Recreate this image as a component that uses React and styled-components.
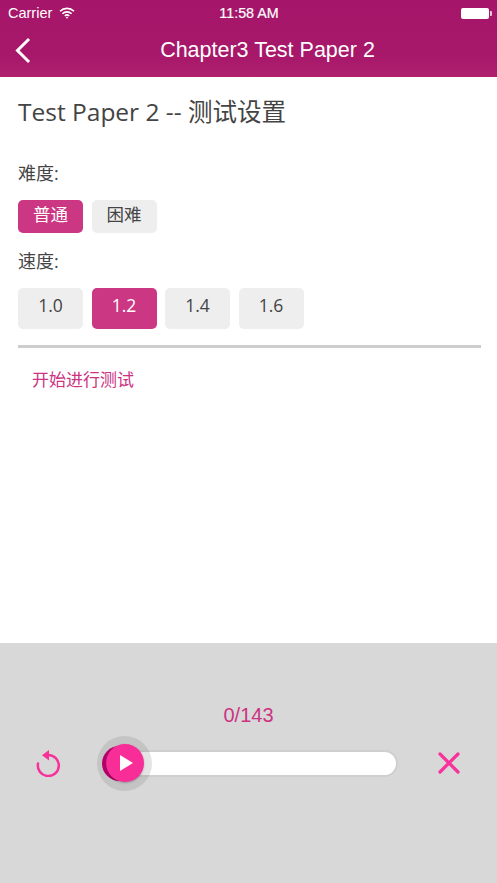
import React from "react";
import styled, { createGlobalStyle } from "styled-components";

const Global = createGlobalStyle`
  html, body { margin: 0; padding: 0; background: #fff; }
  #root { width: 497px; height: 883px; }
`;
const CJK = `"Open Sans", "Noto Sans CJK SC", sans-serif`;
const Screen = styled.div`
  width: 497px; height: 883px; display: flex; flex-direction: column; overflow: hidden;
  font-family: ${CJK}; color: #444;
`;
const Header = styled.header`
  height: 77px; flex: none; display: flex; flex-direction: column; box-sizing: border-box;
  background: linear-gradient(#a5166a 0%, #a7176a 70%, #b0206f 100%);
  color: #fff; font-family: "Liberation Sans", sans-serif;
`;
const StatusBar = styled.div`
  height: 26px; display: grid; grid-template-columns: 1fr auto 1fr; align-items: center;
  padding: 0 7px 0 8px; font-size: 14.5px;
`;
const Carrier = styled.div`display: flex; align-items: center; gap: 7px;`;
const Time = styled.div`font-size: 14.3px; font-weight: 400; -webkit-text-stroke: .2px #fff;`;
const Battery = styled.div`
  justify-self: end; width: 28px; height: 11px; border-radius: 2px; background: #fff; position: relative; margin-right: 1px;
  &::after { content: ""; position: absolute; right: -3px; top: 3px; width: 2px; height: 5px; background: #e9c6da; border-radius: 0 1px 1px 0; }
`;
const NavBar = styled.div`
  flex: 1; display: flex; align-items: center; padding: 0 0 2px 14px;
`;
const Title = styled.div`
  flex: 1; text-align: center; font-size: 21.5px; padding-left: 7px; box-sizing: border-box;
`;
const Main = styled.main`
  flex: 1; padding: 18px 16px 0 18px; display: flex; flex-direction: column; align-items: stretch;
`;
const Heading = styled.h1`
  margin: 0; font-size: 24.5px; font-weight: 400; line-height: 34px; color: #444;
`;
const Label = styled.div`
  font-size: 18px; line-height: 24px; color: #444; margin-top: ${p => p.$top}px;
`;
const Row = styled.div`
  display: flex; gap: 8.5px; margin-top: ${p => p.$top}px;
`;
const Choice = styled.div`
  width: 65px; height: ${p => p.$h}px; border-radius: 5px; display: flex; justify-content: center;
  padding-top: ${p => p.$pt}px; box-sizing: border-box;
  font-size: 17.5px; line-height: 24px;
  background: ${p => (p.$active ? "#cc3783" : "#eeeeee")};
  color: ${p => (p.$active ? "#fff" : "#444")};
`;
const Rule = styled.hr`
  margin: 16px 0 0; border: 0; height: 3px; background: #cdcdcd;
`;
const Start = styled.a`
  margin: 20px 0 0 14px; font-size: 17px; line-height: 24px; color: #cc3383;
`;
const Player = styled.section`
  height: 240px; flex: none; background: #d8d8d8; display: flex; flex-direction: column; align-items: center;
  font-family: "Liberation Sans", sans-serif;
`;
const Count = styled.div`
  margin-top: 60px; font-size: 20px; line-height: 24px; color: #cc3383;
`;
const Controls = styled.div`
  margin-top: 23px; width: 100%; box-sizing: border-box; display: flex; align-items: center;
  padding-left: 34px; height: 26px;
`;
const IconSlot = styled.div`width: 28px; height: 28px; flex: none; display: flex; align-items: center; justify-content: center;`;
const Track = styled.div`
  position: relative; margin-left: 41px; width: 295px; height: 27px; box-sizing: border-box; flex: none;
  border: 2px solid #cfcfcf; border-radius: 14px; background: #fff;
`;
const Halo = styled.div`
  position: absolute; left: -8px; top: -16px; width: 55px; height: 55px; border-radius: 50%;
  background: rgba(120,120,120,.2);
`;
const Crescent = styled.div`
  position: absolute; left: -3px; top: -6px; width: 35px; height: 35px; border-radius: 50%; background: #b5006a;
`;
const Thumb = styled.div`
  position: absolute; left: 1px; top: -8px; width: 38px; height: 38px; border-radius: 50%;
  background: #f82d97; display: flex; align-items: center; justify-content: center; padding-left: 3px; box-sizing: border-box;
  box-shadow: 0 1px 2px rgba(0,0,0,.25);
`;
const CloseSlot = styled(IconSlot)`margin-left: 37px;`;

export default function App() {
  return (
    <Screen>
      <Global />
      <Header>
        <StatusBar>
          <Carrier>
            Carrier
            <svg width="16" height="12" viewBox="0 0 16 12" fill="none" stroke="#fff" strokeWidth="1.6">
              <path d="M1 4.2a10 10 0 0 1 14 0" />
              <path d="M3.4 6.7a6.6 6.6 0 0 1 9.2 0" />
              <path d="M5.8 9a3.2 3.2 0 0 1 4.4 0" />
              <path d="M8 11.8 6.8 10.4a1.8 1.8 0 0 1 2.4 0z" fill="#fff" stroke="none" />
            </svg>
          </Carrier>
          <Time>11:58 AM</Time>
          <Battery />
        </StatusBar>
        <NavBar>
          <svg width="17" height="27" viewBox="0 0 17 27" fill="none" stroke="#fff" strokeWidth="3" strokeLinecap="square">
            <path d="M14 3 3.5 13.5 14 24" />
          </svg>
          <Title>Chapter3 Test Paper 2</Title>
        </NavBar>
      </Header>
      <Main>
        <Heading>Test Paper 2 -- 测试设置</Heading>
        <Label $top={32}>难度:</Label>
        <Row $top={15}>
          <Choice $active $h={33} $pt={2}>普通</Choice>
          <Choice $h={33} $pt={2}>困难</Choice>
        </Row>
        <Label $top={16}>速度:</Label>
        <Row $top={15}>
          <Choice $h={41} $pt={5}>1.0</Choice>
          <Choice $active $h={41} $pt={5}>1.2</Choice>
          <Choice $h={41} $pt={5}>1.4</Choice>
          <Choice $h={41} $pt={5}>1.6</Choice>
        </Row>
        <Rule />
        <Start>开始进行测试</Start>
      </Main>
      <Player>
        <Count>0/143</Count>
        <Controls>
          <IconSlot>
            <svg width="26" height="28" viewBox="0 0 26 28" fill="none" stroke="#f8329a" strokeWidth="2.5">
              <path d="M13 6A10.5 10.5 0 1 1 3 14.5" strokeLinecap="round" />
              <path d="M14 1v10.5L7 6.2z" fill="#f8329a" stroke="none" />
            </svg>
          </IconSlot>
          <Track>
            <Halo />
            <Crescent />
            <Thumb>
              <svg width="13" height="16" viewBox="0 0 13 16"><path d="M0 0v16l13-8z" fill="#fff" /></svg>
            </Thumb>
          </Track>
          <CloseSlot>
            <svg width="24" height="24" viewBox="0 0 24 24" stroke="#f8329a" strokeWidth="3.2" strokeLinecap="round">
              <path d="M3 3l18 18M21 3 3 21" />
            </svg>
          </CloseSlot>
        </Controls>
      </Player>
    </Screen>
  );
}
